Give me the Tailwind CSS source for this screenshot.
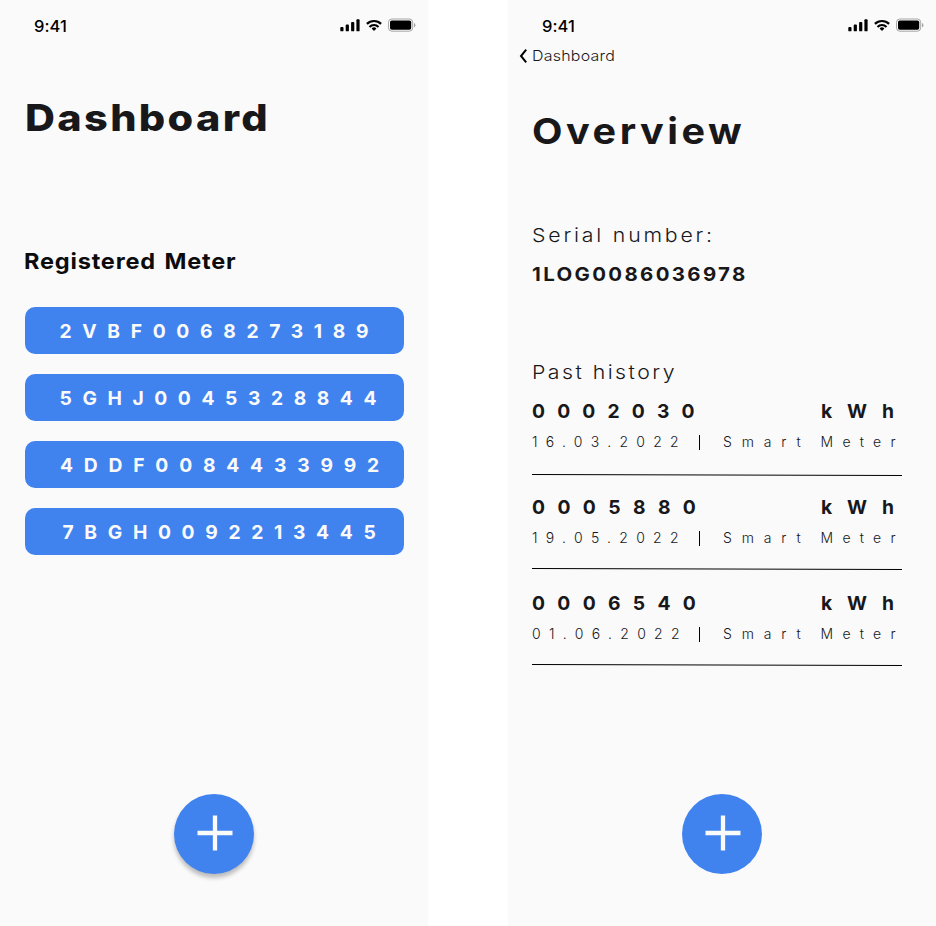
<!DOCTYPE html>
<html lang="en">
<head>
<meta charset="utf-8">
<title>Smart Meter</title>
<script src="https://cdn.jsdelivr.net/npm/@tailwindcss/browser@4"></script>
</head>
<body class="bg-white font-['Inter',sans-serif] text-[#18181a]">
<svg class="hidden">
  <symbol id="status" viewBox="0 0 76 16">
    <g fill="#000">
      <rect x="0.3" y="9" width="3.2" height="4.3" rx="0.9"/>
      <rect x="5.7" y="6.6" width="3.2" height="6.7" rx="0.9"/>
      <rect x="11.1" y="4" width="3.2" height="9.3" rx="0.9"/>
      <rect x="16.4" y="1.3" width="3.2" height="12" rx="0.9"/>
    </g>
    <g fill="none" stroke="#000" stroke-width="2.2">
      <path d="M26.9 5.9 A10.2 10.2 0 0 1 41.1 5.9"/>
      <path d="M29.5 8.9 A6.3 6.3 0 0 1 38.5 8.9"/>
    </g>
    <path d="M34 12.9 L31.6 10.5 A3.5 3.5 0 0 1 36.4 10.5 Z" fill="#000"/>
    <rect x="48.5" y="1" width="24.2" height="12.2" rx="3.4" fill="none" stroke="#a6a6a6"/>
    <rect x="50" y="2.5" width="21.2" height="9.2" rx="1.8" fill="#000"/>
    <path d="M74 5 v4.4 a2.4 2.4 0 0 0 0 -4.4z" fill="#a6a6a6"/>
  </symbol>
  <symbol id="plus" viewBox="0 0 36 36">
    <path d="M18 0.5 V35.5 M0.5 18 H35.5" stroke="#fafafa" stroke-width="4.3" fill="none"/>
  </symbol>
</svg>
<div class="flex h-[926px] w-[936px] justify-between overflow-hidden">

  <section class="flex h-full w-[428px] flex-col bg-[#fafafa]">
    <header class="flex h-12 items-start justify-between pl-[34px] pr-3 pt-[18px] text-black">
      <span class="text-[16.5px] font-medium leading-4 tracking-[0.1px]">9:41</span>
      <svg class="h-4 w-[76px]"><use href="#status"/></svg>
    </header>
    <h1 class="ml-[24.5px] mt-[50px] origin-left scale-x-[1.12] text-[37px] font-extrabold leading-10 tracking-[2.1px]">Dashboard</h1>
    <h2 class="ml-[24px] mt-[109px] origin-left scale-x-[1.07] text-[22px] font-bold leading-7 tracking-[0.75px] text-[#0c0c0e] [word-spacing:2px]">Registered Meter</h2>
    <ul class="mt-8 flex flex-col gap-5 pl-[25px] pr-6 text-[19.3px] font-bold leading-[49px] text-[#fafafa]">
      <li class="h-[47px] whitespace-nowrap rounded-[10px] bg-[#4083ee] pl-[34.5px] tracking-[10.65px]">2VBF0068273189</li>
      <li class="h-[47px] whitespace-nowrap rounded-[10px] bg-[#4083ee] pl-[34.5px] tracking-[10.57px]">5GHJ0045328844</li>
      <li class="h-[47px] whitespace-nowrap rounded-[10px] bg-[#4083ee] pl-[35px] tracking-[10.79px]">4DDF0084433992</li>
      <li class="h-[47px] whitespace-nowrap rounded-[10px] bg-[#4083ee] pl-[37.5px] tracking-[10.65px]">7BGH0092213445</li>
    </ul>
    <button class="mb-[52px] mt-auto flex size-20 items-center justify-center self-center rounded-full bg-[#4083ee] pb-0.5 pl-0.5 shadow-[0_4px_4px_rgba(0,0,0,0.25)]">
      <svg class="size-9"><use href="#plus"/></svg>
    </button>
  </section>

  <section class="flex h-full w-[428px] flex-col bg-[#fafafa]">
    <header class="flex h-12 items-start justify-between pl-[34px] pr-3 pt-[18px] text-black">
      <span class="text-[16.5px] font-medium leading-4 tracking-[0.1px]">9:41</span>
      <svg class="h-4 w-[76px]"><use href="#status"/></svg>
    </header>
    <nav class="flex h-4 items-center gap-[5px] pl-[11px] text-[14.5px] font-light leading-4">
      <svg class="h-4 w-2" viewBox="0 0 8 16"><path d="M7.2 1.7 L2 8 L7.2 14.3" fill="none" stroke="#000" stroke-width="2"/></svg>
      <span class="origin-left scale-x-110 tracking-[0.22px]">Dashboard</span>
    </nav>
    <h1 class="ml-[23.5px] mt-[47px] origin-left scale-x-110 text-[36px] font-bold leading-10 tracking-[3.2px]">Overview</h1>
    <div class="flex flex-col pl-6 pr-[34px]">
      <p class="mt-[73px] origin-left scale-x-[1.12] text-[19px] font-light leading-6 tracking-[2.5px]">Serial number:</p>
      <p class="mt-[14px] origin-left scale-x-[1.06] text-[19.3px] font-bold leading-6 tracking-[2.2px]">1LOG0086036978</p>
      <p class="mt-[75px] origin-left scale-x-[1.12] text-[19px] font-light leading-6 tracking-[2.2px]">Past history</p>

      <article class="mt-[14px] flex h-24 flex-col">
        <div class="flex h-6 text-[19.3px] font-bold leading-6"><span class="w-[289px] shrink-0 tracking-[12.15px]">0002030</span><span class="tracking-[14.9px]">kWh</span></div>
        <div class="mt-[9px] flex h-5 whitespace-nowrap text-[14px] font-light leading-5"><span class="w-[167px] shrink-0 tracking-[8.26px]">16.03.2022</span><span class="mt-[3px] h-[15px] w-px shrink-0 bg-black"></span><span class="ml-[23px] w-[97.5px] shrink-0 tracking-[9.87px]">Smart</span><span class="tracking-[9.28px]">Meter</span></div>
        <svg class="mt-[22px] h-0.5 w-[370px] shrink-0"><path d="M0 0.5 L370 1.5" stroke="#000"/></svg>
      </article>
      <article class="flex h-24 flex-col">
        <div class="flex h-6 text-[19.3px] font-bold leading-6"><span class="w-[289px] shrink-0 tracking-[12.4px]">0005880</span><span class="tracking-[14.9px]">kWh</span></div>
        <div class="mt-[9px] flex h-5 whitespace-nowrap text-[14px] font-light leading-5"><span class="w-[167px] shrink-0 tracking-[8.27px]">19.05.2022</span><span class="mt-[3px] h-[15px] w-px shrink-0 bg-black"></span><span class="ml-[23px] w-[97.5px] shrink-0 tracking-[9.87px]">Smart</span><span class="tracking-[9.28px]">Meter</span></div>
        <svg class="mt-5 h-0.5 w-[370px] shrink-0"><path d="M0 0.5 L370 1.5" stroke="#000"/></svg>
      </article>
      <article class="flex h-24 flex-col">
        <div class="flex h-6 text-[19.3px] font-bold leading-6"><span class="w-[289px] shrink-0 tracking-[12.32px]">0006540</span><span class="tracking-[14.9px]">kWh</span></div>
        <div class="mt-[9px] flex h-5 whitespace-nowrap text-[14px] font-light leading-5"><span class="w-[167px] shrink-0 tracking-[8.32px]">01.06.2022</span><span class="mt-[3px] h-[15px] w-px shrink-0 bg-black"></span><span class="ml-[23px] w-[97.5px] shrink-0 tracking-[9.87px]">Smart</span><span class="tracking-[9.28px]">Meter</span></div>
        <svg class="mt-5 h-0.5 w-[370px] shrink-0"><path d="M0 0.5 L370 1.5" stroke="#000"/></svg>
      </article>
    </div>
    <button class="mb-[52px] mt-auto flex size-20 items-center justify-center self-center rounded-full bg-[#4083ee] pb-0.5 pl-0.5">
      <svg class="size-9"><use href="#plus"/></svg>
    </button>
  </section>
</div>
</body>
</html>
